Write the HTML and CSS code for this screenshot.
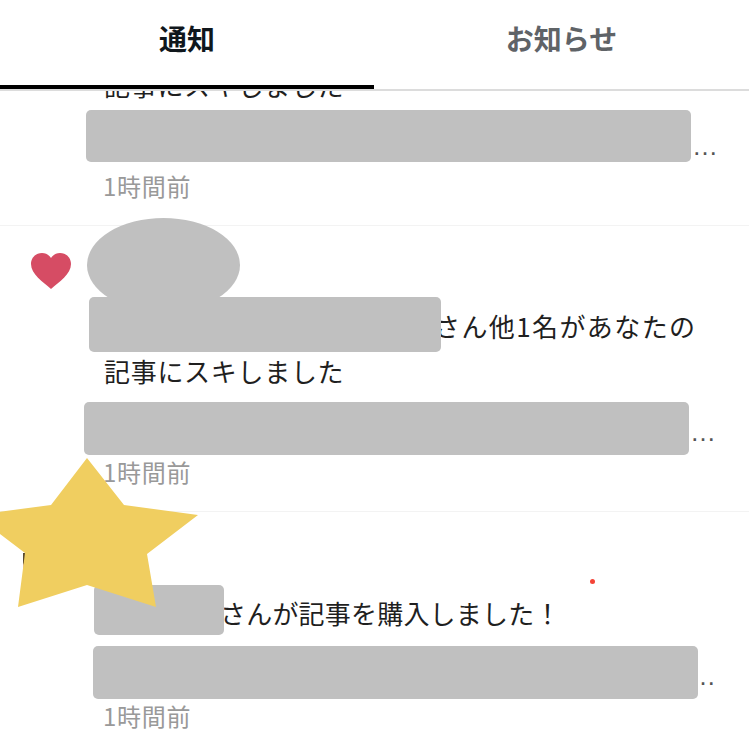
FILE: index.html
```html
<!DOCTYPE html>
<html>
  <head>
    <title>通知</title>
    <link rel="stylesheet" href="styles.css">
  </head>
  <body>
    <div class="tabs">
      <div class="tab tab-active">通知</div>
      <div class="tab">お知らせ</div>
    </div>

    <div class="list">
      <div class="item item-first">
        <div class="line">記事にスキしました</div>
        <div class="title-row">
          <div class="mask title-mask title-first"></div>
          <span class="dots dots-first">…</span>
        </div>
        <div class="time time-first">1時間前</div>
      </div>

      <div class="item item-like">
        <div class="avatar-mask"></div>
        <svg class="heart" viewBox="0 0 40 36">
          <path d="M20 36C12 29 0 21 0 11C0 4.500 5 0 11 0C15 0 18 2 20 5C22 2 25 0 29 0C35 0 40 4.500 40 11C40 21 28 29 20 36Z" />
        </svg>
        <div class="who-row">
          <div class="mask name-mask name-like"></div>
          <span class="who-text who-like">さん他1名があなたの</span>
        </div>
        <div class="line line-second">記事にスキしました</div>
        <div class="title-row">
          <div class="mask title-mask title-like"></div>
          <span class="dots">…</span>
        </div>
        <div class="time">1時間前</div>
      </div>

      <div class="item item-buy">
        <div class="avatar-sliver"></div>
        <svg class="star" viewBox="0 0 220 150">
          <polygon points="109,0 146,47 220,57 169,96 178,149 109,127 40,149 47,95 -3,57 73,47" />
        </svg>
        <span class="red-dot"></span>
        <div class="who-row">
          <div class="mask name-mask name-buy"></div>
          <span class="who-text who-buy">さんが記事を購入しました！</span>
        </div>
        <div class="title-row">
          <div class="mask title-mask title-buy"></div>
          <span class="dots dots-buy">…</span>
        </div>
        <div class="time">1時間前</div>
      </div>
    </div>
  </body>
</html>
```

FILE: styles.css
```css
* {
  box-sizing: border-box;
}
html,
body {
  height: 100%;
}
body {
  margin: 0;
  overflow: hidden;
  background-color: #fff;
  color: #1f1f1f;
  font-family: "Noto Sans CJK JP", "Liberation Sans", sans-serif;
}
.tabs {
  display: flex;
  height: 91px;
  border-bottom: 2px solid #dcdcdc;
}
.tab {
  flex: 1;
  height: 89px;
  padding-top: 18px;
  font-size: 28px;
  line-height: 40px;
  font-weight: bold;
  text-align: center;
  color: #5f6367;
}
.tab-active {
  flex: 0 0 374px;
  color: #10171c;
  border-bottom: 4px solid #000;
}
.list {
  height: 663px;
  overflow: hidden;
}
.item {
  position: relative;
  padding-bottom: 22px;
  border-bottom: 1px solid #f3f3f3;
}
.item-first {
  margin-top: -29px;
}
.item-like {
  padding-top: 71px;
}
.item-buy {
  padding-top: 73px;
  border-bottom: none;
}
.line {
  padding-left: 104px;
  font-size: 26px;
  line-height: 46px;
  letter-spacing: 0.7px;
}
.line-second {
  line-height: 38px;
  padding-bottom: 2px;
}
.mask {
  flex: none;
  position: relative;
  z-index: 1;
  background-color: #c0c0c0;
  border-radius: 5px;
}
.title-row {
  display: flex;
  align-items: flex-end;
  margin-top: 10px;
}
.title-mask {
  width: 605px;
  height: 53px;
}
.title-first {
  height: 52px;
  margin-top: -8px;
  margin-left: 86px;
}
.title-like {
  margin-left: 84px;
}
.title-buy {
  margin-left: 93px;
}
.dots {
  margin-left: 1px;
  margin-bottom: 11px;
  font-family: "Liberation Sans", sans-serif;
  font-size: 26px;
  line-height: 24px;
  color: #555;
}
.dots-first {
  margin-bottom: 4px;
}
.dots-buy {
  margin-left: -8px;
}
.time {
  padding-left: 103px;
  font-size: 24px;
  line-height: 34px;
  letter-spacing: 0.7px;
  color: #999;
}
.time-first {
  margin-top: 7px;
}
.who-row {
  display: flex;
}
.who-text {
  position: relative;
  font-size: 26px;
}
.who-like {
  margin-left: -7px;
  padding-top: 4px;
  line-height: 50px;
  letter-spacing: 1.4px;
}
.who-buy {
  margin-left: -4px;
  padding-top: 5px;
  line-height: 46px;
  letter-spacing: 0.2px;
}
.name-like {
  width: 352px;
  height: 55px;
  margin-left: 89px;
}
.name-buy {
  width: 130px;
  height: 50px;
  margin-left: 94px;
}
.avatar-mask {
  position: absolute;
  top: -8px;
  left: 87px;
  width: 153px;
  height: 94px;
  border-radius: 50%;
  background-color: #c0c0c0;
}
.heart {
  position: absolute;
  top: 27px;
  left: 31px;
  width: 40px;
  height: 36px;
  fill: #d64c64;
}
.star {
  position: absolute;
  top: -54px;
  left: -22px;
  z-index: 2;
  width: 220px;
  height: 150px;
  overflow: visible;
  fill: #f0ce60;
}
.avatar-sliver {
  position: absolute;
  top: 41px;
  left: 23px;
  width: 4px;
  height: 22px;
  background: linear-gradient(#5a4a30 45%, #d9a7b5 55%);
}
.red-dot {
  position: absolute;
  top: 67px;
  left: 590px;
  width: 5px;
  height: 5px;
  border-radius: 50%;
  background-color: #f44336;
}
```
